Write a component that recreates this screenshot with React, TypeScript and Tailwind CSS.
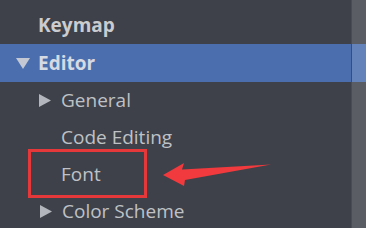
import React from 'react';

const TriRight: React.FC = () => (
  <svg width="12" height="13" viewBox="0 0 12 13" className="shrink-0">
    <path d="M0 0 L12 6.5 L0 13 Z" fill="#b3b6bc" />
  </svg>
);

const TriDown: React.FC = () => (
  <svg width="14" height="11" viewBox="0 0 14 11" className="shrink-0">
    <path d="M0 0 L14 0 L7 11 Z" fill="#c3c8d2" />
  </svg>
);

const App: React.FC = () => {
  return (
    <div
      className="relative w-[366px] h-[228px] overflow-hidden bg-[#3e4149] pt-[7px] text-[19px]"
      style={{ fontFamily: '"Open Sans", "Noto Sans", sans-serif' }}
    >
      <div className="flex h-[37px] items-center pl-[38px] font-bold text-[#cbcccf]">Keymap</div>
      <div className="flex h-[38px] items-center gap-[8px] bg-[#4b6eaf] pl-[16px] font-bold text-[#d6dae2]">
        <TriDown />
        <span>Editor</span>
      </div>
      <div className="flex h-[37px] items-center gap-[10px] pl-[39px] text-[#bfc1c6]">
        <TriRight />
        <span>General</span>
      </div>
      <div className="flex h-[37px] items-center pl-[61px] text-[#bfc1c6]">Code Editing</div>
      <div className="flex h-[37px] items-center pl-[61px] text-[#bfc1c6]">Font</div>
      <div className="flex h-[37px] items-center gap-[10px] pl-[40px] text-[#bfc1c6]">
        <TriRight />
        <span>Color Scheme</span>
      </div>

      {/* scrollbar track */}
      <div className="absolute right-0 top-0 h-full w-[15px] border-l border-[#4a4c52] bg-white/15" />

      {/* annotation */}
      <div className="absolute left-[28px] top-[149px] h-[49px] w-[119px] border-[3px] border-[#e5383b]" />
      <svg className="absolute left-0 top-0" width="366" height="228" viewBox="0 0 366 228">
        <polygon
          points="163,175 184,163 182,169.5 271,164.5 185,180 184,186"
          fill="#f03a3d"
        />
      </svg>
    </div>
  );
};

export default App;
